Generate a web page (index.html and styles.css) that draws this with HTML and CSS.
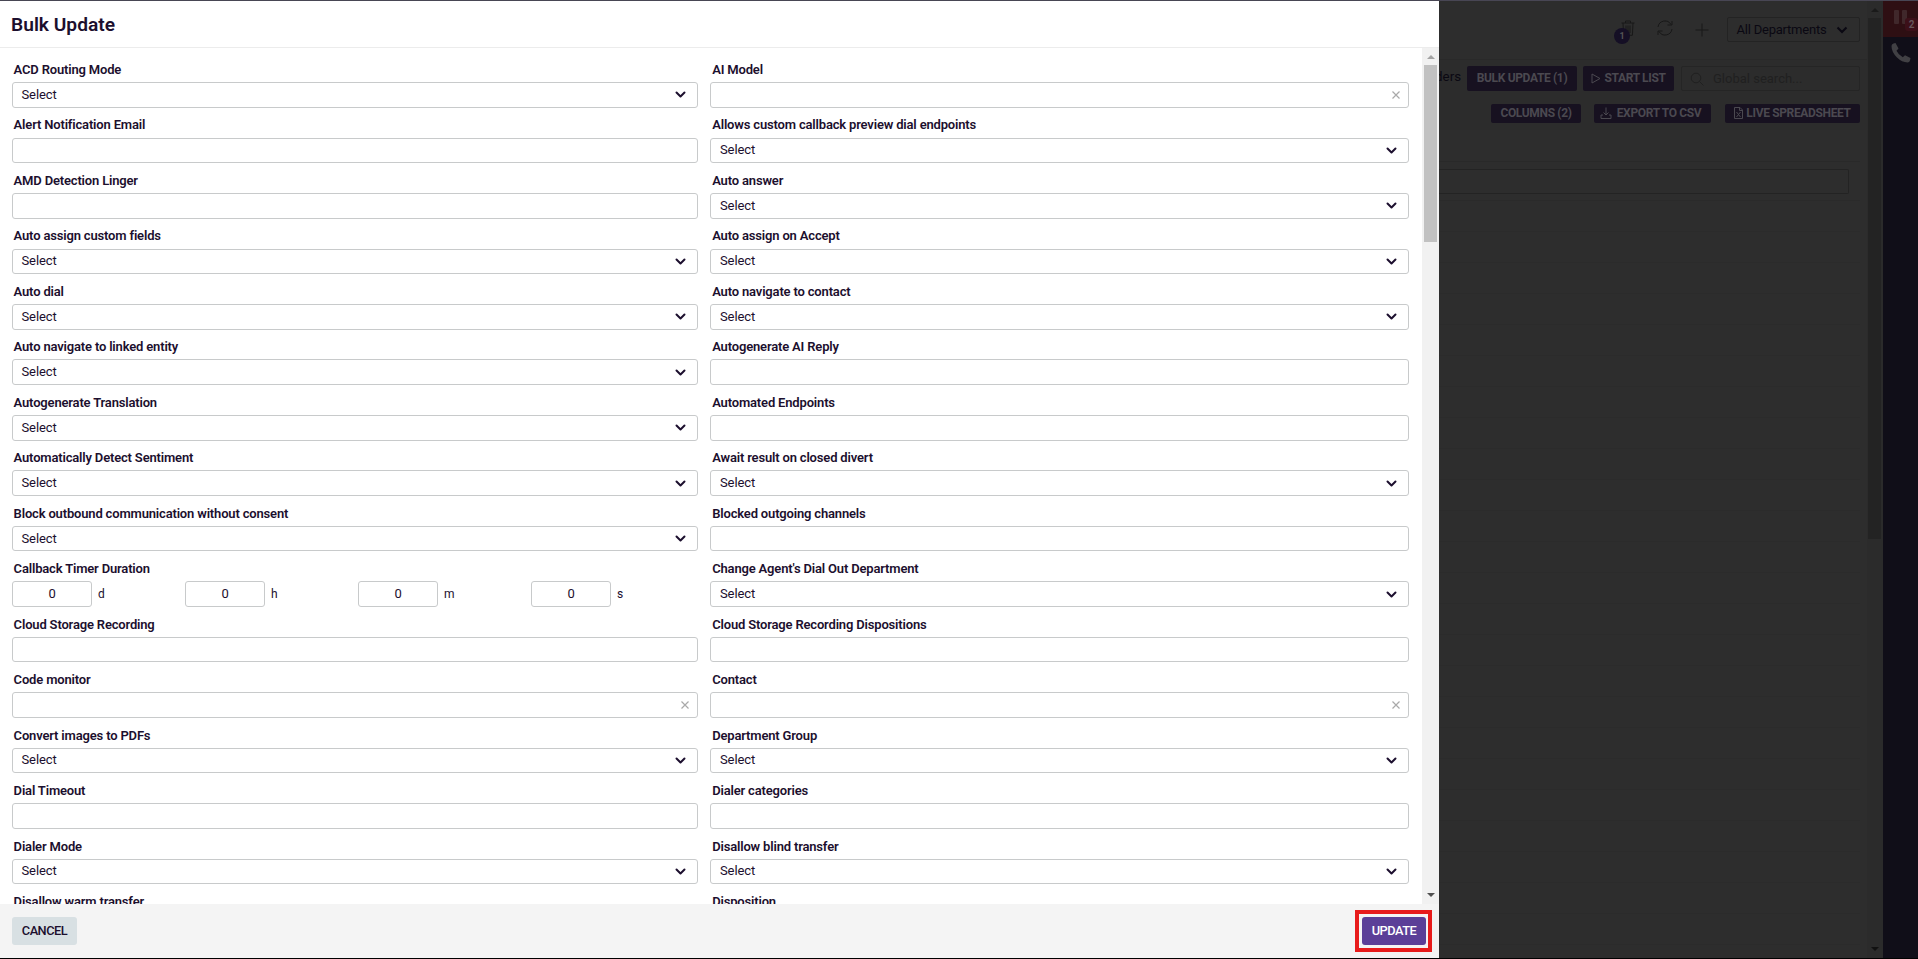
FILE: index.html
```html
<!DOCTYPE html>
<html lang="en">
<head>
<meta charset="utf-8">
<title>Bulk Update</title>
<link rel="stylesheet" href="styles.css">
</head>
<body>
<div class="app">
  <section class="panel">
    <header class="panel-header"><h1 class="title">Bulk Update</h1></header>
    <div class="panel-body">
      <form class="fields" id="fields"></form>
      <div class="scrollbar">
        <i class="arrow up"></i>
        <i class="thumb"></i>
        <i class="arrow down"></i>
      </div>
    </div>
    <footer class="panel-footer">
      <button class="btn cancel">CANCEL</button>
      <div class="highlight"><button class="btn update">UPDATE</button></div>
    </footer>
  </section>

  <main class="backdrop">
    <div class="page">
      <div class="topbar">
        <div class="trash">
          <svg width="14" height="16" viewBox="0 0 14 16"><path d="M.5 3h13M4.500 3V1h5v2M2 3l.6 12.300h8.800L12 3M5 5.500v7.500M7 5.500v7.500M9 5.500v7.500"/></svg>
          <span class="count">1</span>
        </div>
        <svg class="refresh" width="16" height="16" viewBox="0 0 16 16"><path d="M1 7A7 7 0 0 1 14 4.500M15 1v4h-4.500M15 9A7 7 0 0 1 2 11.500M1 15v-4h4.500"/></svg>
        <svg class="plus" width="14" height="14" viewBox="0 0 14 14"><path d="M7 .5v13M.5 7h13"/></svg>
        <div class="department"><span>All Departments</span><svg width="12" height="8" viewBox="0 0 12 8"><path d="M1.500 1.500 6 6l4.500-4.500"/></svg></div>
      </div>
      <div class="actions">
        <span class="ders">ders</span>
        <span class="dark-btn bulk">BULK UPDATE (1)</span>
        <span class="dark-btn start"><svg width="10" height="11" viewBox="0 0 10 11"><path d="M1 1v9l8-4.500z"/></svg>START LIST</span>
        <div class="search"><svg width="14" height="14" viewBox="0 0 14 14"><circle cx="6" cy="6" r="4.800"/><path d="M9.500 9.500 13.500 13.500"/></svg><span>Global search...</span></div>
      </div>
      <div class="tools">
        <span class="dark-btn columns">COLUMNS (2)</span>
        <span class="dark-btn export"><svg width="12" height="12" viewBox="0 0 12 12"><path d="M6 .5v7.500M3.500 5.500 6 8l2.500-2.500M3 8H1v3.500h10V8H9"/></svg>EXPORT TO CSV</span>
        <span class="dark-btn live"><svg width="9" height="12" viewBox="0 0 9 12"><path d="M.5.5H6L8.500 3v8.500h-8zM5.500.5V3.500h3M2.500 5l4 5M6.500 5l-4 5"/></svg>LIVE SPREADSHEET</span>
      </div>
      <div class="table">
        <div class="table-head"></div>
        <div class="filter-row"><div class="filter"></div></div>
        <div class="lines"></div>
      </div>
    </div>
    <div class="page-scroll">
      <i class="arrow up"></i>
      <i class="page-thumb"></i>
      <i class="arrow down"></i>
    </div>
  </main>
  <aside class="rail">
    <div class="pause"><i></i><i></i><b>2</b></div>
    <svg class="phone" width="22" height="22" viewBox="0 0 22 22"><path d="M1.500 4Q1.500 2.300 3.500 1.500L5.500 1 8.500 6.500 6.500 8.800Q8.500 13 12.800 15.300L15 13.300 20.500 16 20 18.500Q19.500 20.500 17.500 20.500 12 20.300 7 15.500 1.500 10 1.500 4z"/></svg>
  </aside>
</div>
<script src="fields.js"></script>
</body>
</html>
```
FILE: styles.css
```css
* { box-sizing: border-box; }
body {
  margin: 0;
  height: 959px;
  overflow: hidden;
  background: #000;
  font-family: Roboto, "Liberation Sans", sans-serif;
  font-size: 13px;
  color: #1c0f2e;
}
svg { fill: none; flex: none; }
.app {
  display: flex;
  height: 958px;
  border-top: 1px solid #484654;
}
.panel {
  width: 1439px;
  flex: none;
  display: flex;
  flex-direction: column;
  background: #fff;
}
.panel-header {
  height: 47px;
  flex: none;
  padding: 13px 11px 0;
  border-bottom: 1px solid #ececec;
}
.title { margin: 0; font-size: 19.2px; line-height: 22px; font-weight: 600; }
.panel-body { height: 856px; flex: none; display: flex; overflow: hidden; }
.fields {
  width: 1422px;
  flex: none;
  padding: 12px 13px 0 12px;
  display: grid;
  grid-template-columns: 686px 699px;
  column-gap: 12px;
  grid-auto-rows: 55.47px;
}
.label {
  display: block;
  height: 22.1px;
  padding-left: 1.6px;
  line-height: 19px;
  font-size: 13px;
  font-weight: 600;
  letter-spacing: -0.17px;
  white-space: nowrap;
}
.field:nth-child(even) .label { padding-left: 2.2px; }
.control {
  height: 25.6px;
  border: 1px solid #c8cacb;
  border-radius: 3px;
  display: flex;
  align-items: center;
  justify-content: space-between;
  padding: 0 11.500px 0 8.500px;
  line-height: 22px;
  letter-spacing: -0.1px;
}
.control > span { margin-bottom: 0.2px; }
.field:nth-child(even) .control { padding-left: 9px; }
.control.clearable { justify-content: flex-end; padding-right: 8px; }
.chevron { stroke: #1c0f2e; stroke-width: 2; stroke-linecap: round; stroke-linejoin: round; margin-top: 1px; }
.clear { stroke: #a9a9a9; stroke-width: 1.2; }
.duration { display: grid; grid-template-columns: repeat(4, 173px); }
.unit { display: flex; align-items: center; gap: 6px; font-size: 12px; }
.field .unit .control { width: 80px; justify-content: center; padding: 0; font-size: 13px; }
.scrollbar {
  width: 17px;
  background: #f1f1f1;
  display: flex;
  flex-direction: column;
  align-items: center;
}
.arrow { width: 0; height: 0; border: 4px solid transparent; border-top-width: 0; border-bottom-width: 4px; }
.arrow.up { border-bottom-color: #a3a3a3; margin: 7px 0 6px; }
.arrow.down { border-width: 4px 4px 0; border-top-color: #505050; margin: auto 0 7px; }
.thumb { width: 13px; height: 177px; background: #c1c1c1; }
.panel-footer {
  flex: 1;
  background: #f4f4f4;
  padding: 0 7px 0 12px;
  display: flex;
  justify-content: space-between;
  align-items: flex-start;
}
.btn {
  height: 28px;
  border: 0;
  border-radius: 3px;
  font: 500 12.8px Roboto, sans-serif;
  letter-spacing: -0.5px;
  padding: 0 0 1px;
}
.cancel { width: 65px; margin-top: 13px; background: #d8e0e3; color: #1c0f2e; }
.update { width: 64px; padding-left: 1px; background: #5b3f98; color: #fff; }
.highlight { margin-top: 6px; width: 77px; height: 42px; border: 4px solid #e81c1c; padding: 3px 2.500px; background: #f4f4f4; }

.backdrop { width: 444px; flex: none; display: flex; background: #2d2d2d; color: #0a0812; }
.page { width: 428px; overflow: hidden; }
.topbar {
  height: 59px;
  display: flex;
  align-items: flex-start;
  border-bottom: 1px solid #292929;
  padding: 16px 0 0 182px;
}
.topbar svg { stroke: #181818; }
.trash { position: relative; width: 36px; height: 28px; margin-top: 3px; }
.count {
  position: absolute;
  left: -7px;
  top: 8px;
  width: 16px;
  height: 16px;
  border-radius: 50%;
  background: #150f25;
  color: #555;
  font-size: 9px;
  line-height: 16px;
  font-weight: 700;
  text-align: center;
}
.topbar .refresh { margin: 3px 22px 0 0; }
.topbar .plus { margin: 6px 18px 0 0; }
.department {
  width: 133px;
  height: 25px;
  border: 1px solid #232323;
  border-radius: 2px;
  display: flex;
  align-items: center;
  justify-content: space-between;
  padding: 0 11px 0 8.500px;
  letter-spacing: -0.22px;
}
.topbar .department svg { stroke: #0a0812; stroke-width: 2; }
.actions { height: 44px; display: flex; padding: 6px 0 0; background: #2c2c2c; }
.ders { width: 28px; flex: none; font-size: 13.300px; line-height: 22px; white-space: nowrap; direction: rtl; padding-right: 6px; }
.dark-btn {
  display: flex;
  flex: none;
  align-items: center;
  justify-content: center;
  height: 25px;
  border-radius: 2px;
  background: #171120;
  color: #4b4950;
  font-size: 12px;
  font-weight: 700;
  letter-spacing: -0.35px;
  padding-bottom: 1px;
  white-space: nowrap;
}
.dark-btn svg { stroke: #4b4950; }
.bulk { width: 110px; margin-right: 6px; }
.start { width: 91px; margin-right: 7px; gap: 3px; }
.search {
  width: 179px;
  height: 25px;
  border: 1px solid #252525;
  border-radius: 2px;
  display: flex;
  align-items: center;
  gap: 9px;
  padding-left: 8px;
  color: #202020;
}
.search svg { stroke: #202020; }
.tools { height: 26px; display: flex; background: #2c2c2c; }
.tools .dark-btn { height: 19px; }
.columns { width: 90px; margin-left: 52px; }
.export { width: 117px; margin-left: 13px; gap: 5px; padding-right: 4px; }
.live { width: 135px; margin-left: 14px; gap: 3px; }
.table { width: 421px; height: 828px; }
.table-head { height: 32px; border-bottom: 1px solid #292929; }
.filter-row { height: 39px; padding-top: 7px; border-bottom: 1px solid #2a2a2a; }
.filter { width: 410px; height: 25px; border: 1px solid #232323; border-left: 0; border-radius: 0 2px 2px 0; }
.lines { height: 757px; background: repeating-linear-gradient(#2d2d2d 0 30px, #2b2b2b 30px 31px); }
.page-scroll {
  width: 16px;
  padding-right: 1px;
  display: flex;
  flex-direction: column;
  align-items: center;
  background: #2b2b2b;
}
.page-scroll .up { margin: 7px 0 6px; border-bottom-color: #1a1a1a; }
.page-scroll .down { border-top-color: #111; }
.page-thumb { width: 13px; height: 521px; background: #232323; }
.rail { width: 35px; background: #100e18; }
.pause { position: relative; height: 36px; background: #2e0f13; display: flex; gap: 3px; padding: 9px 0 0 11px; }
.pause i { width: 5px; height: 14px; border-radius: 1px; background: #40282b; }
.pause b {
  position: absolute;
  left: 22px;
  top: 17px;
  width: 13px;
  height: 13px;
  border-radius: 3px;
  background: #3c1019;
  color: #66555a;
  font-size: 10px;
  line-height: 13px;
  text-align: center;
}
.phone { display: block; margin: 5px 0 0 7px; fill: #414044; }
```
FILE: fields.js
```js
// Each entry is [label, control type]; entries fill the grid row by row.
const fields = [
  ["ACD Routing Mode", "select"], ["AI Model", "clear"],
  ["Alert Notification Email", "text"], ["Allows custom callback preview dial endpoints", "select"],
  ["AMD Detection Linger", "text"], ["Auto answer", "select"],
  ["Auto assign custom fields", "select"], ["Auto assign on Accept", "select"],
  ["Auto dial", "select"], ["Auto navigate to contact", "select"],
  ["Auto navigate to linked entity", "select"], ["Autogenerate AI Reply", "text"],
  ["Autogenerate Translation", "select"], ["Automated Endpoints", "text"],
  ["Automatically Detect Sentiment", "select"], ["Await result on closed divert", "select"],
  ["Block outbound communication without consent", "select"], ["Blocked outgoing channels", "text"],
  ["Callback Timer Duration", "duration"], ["Change Agent's Dial Out Department", "select"],
  ["Cloud Storage Recording", "text"], ["Cloud Storage Recording Dispositions", "text"],
  ["Code monitor", "clear"], ["Contact", "clear"],
  ["Convert images to PDFs", "select"], ["Department Group", "select"],
  ["Dial Timeout", "text"], ["Dialer categories", "text"],
  ["Dialer Mode", "select"], ["Disallow blind transfer", "select"],
  ["Disallow warm transfer", "label"], ["Disposition", "label"]
];
const controls = {
  label: "",
  text: '<div class="control"></div>',
  select: '<div class="control"><span>Select</span><svg class="chevron" width="11" height="8" viewBox="0 0 11 8"><path d="M1.500 1.500 5.500 5.500l4-4"/></svg></div>',
  clear: '<div class="control clearable"><svg class="clear" width="8" height="8" viewBox="0 0 8 8"><path d="M.5.5l7 7M7.500.5l-7 7"/></svg></div>',
  duration: '<div class="duration">' + ["d", "h", "m", "s"].map(u => `<div class="unit"><div class="control">0</div><span>${u}</span></div>`).join("") + "</div>"
};
document.getElementById("fields").innerHTML = fields
  .map(([label, type]) => `<div class="field"><span class="label">${label}</span>${controls[type]}</div>`)
  .join("");
```
